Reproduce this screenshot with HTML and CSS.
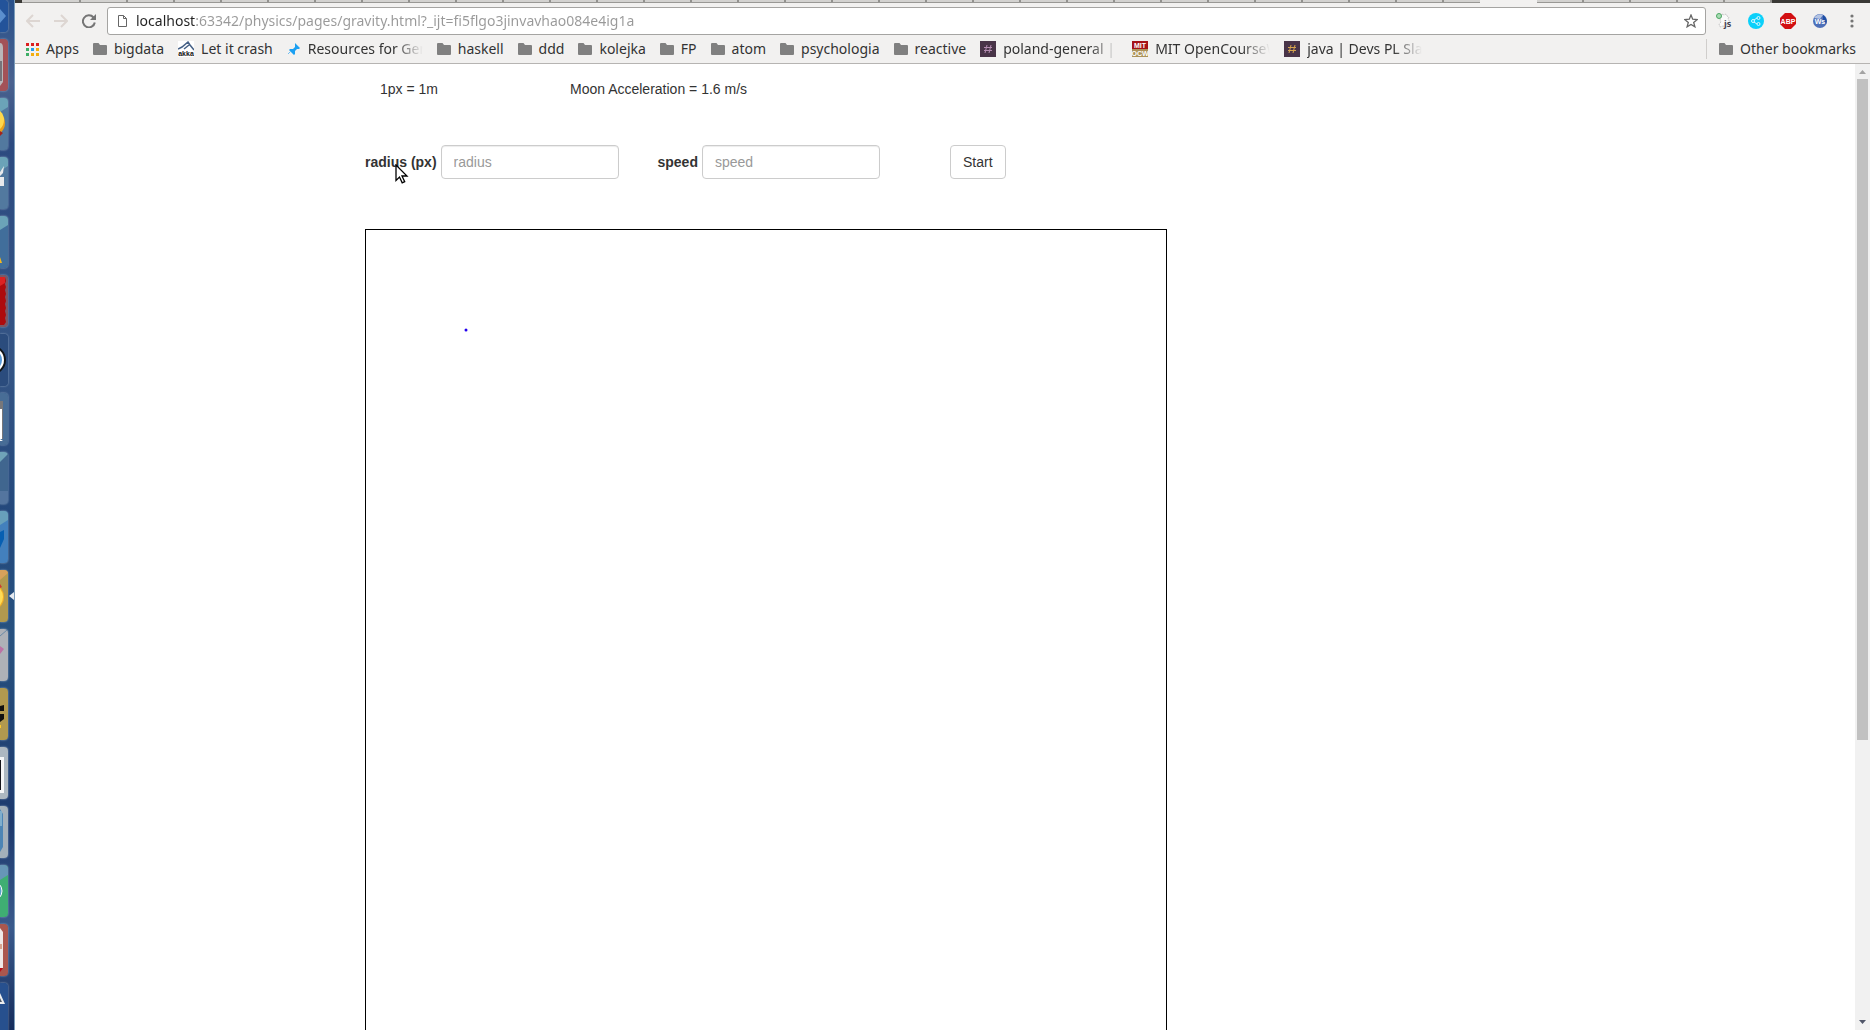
FILE: index.html
```html
<!DOCTYPE html>
<html lang="en">
<head>
  <meta charset="UTF-8">
  <meta name="viewport" content="width=device-width, initial-scale=1.0">
  <title>Gravity</title>
  <link rel="stylesheet" href="styles.css">
</head>
<body>
  <!-- shared icons -->
  <svg class="sprite" aria-hidden="true">
    <symbol id="folder" viewBox="0 0 14 12">
      <path d="M1 0h4.500l1.500 2h6q1 0 1 1v8q0 1-1 1H1q-1 0-1-1V1q0-1 1-1z" fill="#808080"/>
    </symbol>
  </svg>

  <!-- launcher -->
  <aside class="dock">
    <svg class="tile tile-first" viewBox="0 0 8 32"><path fill="#23539a" d="M0 0h8v32H0z"/><path d="M0 9l6 7-6 7z" fill="#5b8fce"/></svg>
    <svg class="tile" viewBox="0 0 8 52"><path fill="#a35257" d="M0 0h8v52H0z"/><path d="M0 4q3 0 3 5v34l-3 4z" fill="#b9b6b8"/><path d="M0 22h2v20H0z" fill="#77747a"/></svg>
    <svg class="tile" viewBox="0 0 8 52"><path fill="#52799f" d="M0 0h8v52H0z"/><path d="M0 0h8v9L0 14z" fill="#6ba3b8"/><circle cx="-8" cy="25" r="13" fill="#e8a01c"/><circle cx="-8" cy="22" r="12" fill="#ffd84c"/><path d="M0 33l3 2-3 3z" fill="#a3241c"/></svg>
    <svg class="tile" viewBox="0 0 8 52"><path fill="#52799f" d="M0 0h8v52H0z"/><path d="M0 0h8v9L0 14z" fill="#6ba3b8"/><path d="M0 15l4-6-1 7-3 3zM0 20h4v9H0z" fill="#e9eaec"/></svg>
    <svg class="tile" viewBox="0 0 8 52"><path fill="#416e9b" d="M0 0h8v52H0z"/><path d="M0 0h8v9L0 14z" fill="#6ba3b8"/><path d="M0 41l2 6H0z" fill="#f5b81c"/></svg>
    <svg class="tile" viewBox="0 0 8 52"><path fill="#7c5866" d="M0 0h8v52H0z"/><path d="M0 2h5l1 4-1 3 1 3-1 3 1 4-1 3 1 4-1 3 1 4-1 3 1 4-1 3 1 4-2 3H0z" fill="#ad0b0d"/><path d="M0 2h5v6L0 11z" fill="#dc2222"/></svg>
    <svg class="tile" viewBox="0 0 8 52"><path fill="#2b4c7d" d="M0 0h8v52H0z"/><circle cx="-9" cy="26" r="15" fill="#101418"/><circle cx="-9" cy="26" r="13" fill="#fff"/><circle cx="-9" cy="26" r="11" fill="#5b9bd8"/></svg>
    <svg class="tile" viewBox="0 0 8 52"><path fill="#486d96" d="M0 0h8v52H0z"/><path d="M0 8h3v38H0z" fill="#77777a"/><path d="M0 16h2v30H0zM0 46l3 2H0z" fill="#fff"/></svg>
    <svg class="tile" viewBox="0 0 8 52"><path fill="#40668f" d="M0 0h8v52H0z"/><path d="M0 0h8v2L0 10z" fill="#6fa3b8"/><path d="M0 39h8v13H0z" fill="#54759f"/></svg>
    <svg class="tile" viewBox="0 0 8 52"><path fill="#4380bd" d="M0 0h8v52H0z"/><path d="M0 0h8v9L0 14z" fill="#68a0bb"/><path d="M0 21l4-2v9l-4 9z" fill="#075fb2"/></svg>
    <svg class="tile" viewBox="0 0 8 52"><path fill="#b1994f" d="M0 0h8v52H0z"/><path d="M0 0h8v3L0 10z" fill="#d7a15b"/><circle cx="-10" cy="27" r="14" fill="#f2ae25"/><circle cx="-10" cy="27" r="13" fill="#ffdc54"/><path d="M0 14l2 3-2 1z" fill="#cf3b30"/></svg>
    <svg class="tile" viewBox="0 0 8 52"><path fill="#aeb1b7" d="M0 0h8v52H0z"/><path d="M0 7L7 1" stroke="#6a89a7"/><path d="M0 17l4 3-4 5z" fill="#bc72a5"/></svg>
    <svg class="tile" viewBox="0 0 8 52"><path fill="#b1994f" d="M0 0h8v52H0z"/><path d="M0 18l4-1v6H0zM0 26h4v5l-4 3z" fill="#111"/><path d="M0 37h1v3H0z" fill="#ffc92c"/></svg>
    <svg class="tile" viewBox="0 0 8 52"><path fill="#adb8c1" d="M0 0h8v52H0z"/><path d="M0 10h4v36H0z" fill="#f5f6f7"/><path d="M0 13h1v30H0z" fill="#15151b"/></svg>
    <svg class="tile" viewBox="0 0 8 52"><path fill="#a4b0ba" d="M0 0h8v52H0z"/><path d="M0 3l3 5v33l-3 5z" fill="#4d85b5"/><path d="M0 5h2v15H0z" fill="#7faecd"/></svg>
    <svg class="tile" viewBox="0 0 8 52"><path fill="#3fae73" d="M0 0h8v52H0z"/><path d="M0 0h8v10L0 15z" fill="#6796b7"/><circle cx="-8" cy="26" r="10" fill="#5b9fca" stroke="#fff"/></svg>
    <svg class="tile" viewBox="0 0 8 52"><path fill="#aa574e" d="M0 0h8v52H0z"/><path d="M0 4l3 4v36H0z" fill="#eee9e7"/><path d="M0 20h2v5H0z" fill="#d7a58f"/><path d="M0 44h3l-3 4z" fill="#b90f19"/></svg>
    <svg class="tile" viewBox="0 0 8 52"><path fill="#27508e" d="M0 0h8v52H0z"/><path d="M0 10l5 11H0z" fill="#eceded"/><path d="M0 15l2 4H0z" fill="#505a68"/></svg>
    <svg class="dock-pointer" viewBox="0 0 5 8"><path d="M0 4l5-4v8z" fill="#e5e9ef"/></svg>
  </aside>

  <div class="browser">
    <div class="tab-strip">
      <div class="tabs tabs-left"></div>
      <div class="tab-active"></div>
      <div class="tabs tabs-right"></div>
      <div class="tabs-end"></div>
    </div>

    <!-- toolbar -->
    <div class="toolbar">
      <button class="tool" type="button" aria-label="Back">
        <svg width="14" height="14" viewBox="0 0 14 14" fill="none" stroke="#ddd6d2" stroke-width="2"><path d="M14 7H1M7 1L1 7l6 6"/></svg>
      </button>
      <button class="tool" type="button" aria-label="Forward">
        <svg width="14" height="14" viewBox="0 0 14 14" fill="none" stroke="#ddd6d2" stroke-width="2"><path d="M0 7h13M7 1l6 6-6 6"/></svg>
      </button>
      <button class="tool" type="button" aria-label="Reload">
        <svg width="14" height="14" viewBox="0 0 14 14"><path d="M11.500 3.500A6 6 0 1 0 12.800 8.500" fill="none" stroke="#757575" stroke-width="2"/><path d="M14 0v6H8z" fill="#757575"/></svg>
      </button>
      <div class="address">
        <svg width="9" height="12" viewBox="0 0 9 12" fill="none" stroke="#666"><path d="M.500.500h5l3 3v8h-8zM5.500.500v3h3"/></svg>
        <input class="address-input" type="text" aria-label="Address" value="localhost:63342/physics/pages/gravity.html?_ijt=fi5flgo3jinvavhao084e4ig1a">
        <button class="tool" type="button" aria-label="Bookmark">
          <svg width="14" height="14" viewBox="0 0 14 14" fill="none" stroke="#666" stroke-width="1.300"><path d="M7 1l1.700 4.200 4.500.3-3.500 2.900 1.200 4.400L7 10.400l-3.900 2.400 1.200-4.400L.8 5.500l4.500-.3z"/></svg>
        </button>
      </div>
      <div class="extensions">
        <button class="tool" type="button" aria-label="Script switcher">
          <svg width="16" height="16" viewBox="0 0 16 16"><path d="M6 1l2 1 2-1 1 2 2 1-1 2 2 3-3 1-1 4-3-1-3 1-1-3 2-2-1-2z" fill="#fafafa" stroke="#c6c6c6" stroke-dasharray="2 1"/><circle cx="3" cy="3" r="2.500" fill="#a8dbb3" stroke="#4ba762"/><text x="8" y="14" class="js-text">js</text></svg>
        </button>
        <button class="tool" type="button" aria-label="Share">
          <svg width="16" height="16" viewBox="0 0 16 16"><circle cx="8" cy="8" r="8" fill="#0bd0fa"/><g fill="none" stroke="#d8f7ff"><path d="M6 7l3-2M6 9l3 2"/><circle cx="5" cy="8" r="1.500"/><circle cx="10.500" cy="5" r="1.500"/><circle cx="10.500" cy="11" r="1.500"/></g></svg>
        </button>
        <button class="tool" type="button" aria-label="Adblock">
          <svg width="16" height="16" viewBox="0 0 16 16"><path d="M5 0h6l5 5v6l-5 5H5l-5-5V5z" fill="#d20f12"/><text x="8" y="11" class="icon-text">ABP</text></svg>
        </button>
        <button class="tool" type="button" aria-label="Web of words">
          <svg width="16" height="16" viewBox="0 0 16 16"><circle cx="8" cy="8" r="7" fill="#4e70b8"/><path d="M2 5a7 7 0 0 1 9-3L8 6z" fill="#b3c3e3"/><path d="M11 2a7 7 0 0 1 3 9l-3-4z" fill="#1e4fa5"/><text x="8" y="11" class="icon-text">Ws</text></svg>
        </button>
        <button class="tool" type="button" aria-label="Menu">
          <svg width="16" height="16" viewBox="0 0 16 16" fill="#757575"><circle cx="8" cy="3" r="1.600"/><circle cx="8" cy="8" r="1.600"/><circle cx="8" cy="13" r="1.600"/></svg>
        </button>
      </div>
    </div>

    <!-- bookmarks -->
    <nav class="bookmarks">
      <a class="bookmark" href="#"><svg width="13" height="13" viewBox="0 0 13 13"><path d="M0 0h3v3H0zM5 0h3v3H5zM10 0h3v3h-3z" fill="#dc1f1f"/><path d="M0 5h3v3H0zM0 10h3v3H0z" fill="#3eae66"/><path d="M5 5h3v3H5z" fill="#249eed"/><path d="M10 5h3v3h-3zM5 10h3v3H5zM10 10h3v3h-3z" fill="#f3ae10"/></svg><span>Apps</span></a>
      <a class="bookmark" href="#"><svg width="14" height="12"><use href="#folder"/></svg><span>bigdata</span></a>
      <a class="bookmark" href="#"><svg width="16" height="16" viewBox="0 0 16 16"><path fill="#fff" d="M0 0h16v16H0z"/><path d="M0 8l4-2 6-5 2 3 4 5M6 8l5-4" fill="none" stroke="#456086" stroke-width="1.500"/><text x="8" y="15" class="icon-text icon-text-dark">akka</text></svg><span>Let it crash</span></a>
      <a class="bookmark bookmark-long" href="#"><svg width="14" height="14" viewBox="0 0 14 14"><path d="M8 1l5 5-1 1h-2l-2 2v3l-1 1-5-5 1-1h3l2-2V2z" fill="#1ba0f2"/><path d="M4 9l-3 3" stroke="#6fbdf0"/></svg><span>Resources for Germany</span></a>
      <a class="bookmark" href="#"><svg width="14" height="12"><use href="#folder"/></svg><span>haskell</span></a>
      <a class="bookmark" href="#"><svg width="14" height="12"><use href="#folder"/></svg><span>ddd</span></a>
      <a class="bookmark" href="#"><svg width="14" height="12"><use href="#folder"/></svg><span>kolejka</span></a>
      <a class="bookmark" href="#"><svg width="14" height="12"><use href="#folder"/></svg><span>FP</span></a>
      <a class="bookmark" href="#"><svg width="14" height="12"><use href="#folder"/></svg><span>atom</span></a>
      <a class="bookmark" href="#"><svg width="14" height="12"><use href="#folder"/></svg><span>psychologia</span></a>
      <a class="bookmark" href="#"><svg width="14" height="12"><use href="#folder"/></svg><span>reactive</span></a>
      <a class="bookmark bookmark-long" href="#"><svg width="16" height="16" viewBox="0 0 16 16"><path fill="#493448" d="M0 0h16v16H0z"/><path d="M7 4L5 12M11 4L9 12M4 6.500h8M4 9.500h8" stroke="#b38bb0"/></svg><span>poland-general | Slack</span></a>
      <a class="bookmark bookmark-long" href="#"><svg width="16" height="16" viewBox="0 0 16 16"><path fill="#a51318" d="M0 0h16v8H0z"/><path fill="#ac935a" d="M0 8h16v8H0z"/><text x="8" y="7" class="icon-text">MIT</text><text x="8" y="15" class="icon-text">OCW</text></svg><span>MIT OpenCourseWare</span></a>
      <a class="bookmark bookmark-long" href="#"><svg width="16" height="16" viewBox="0 0 16 16"><path fill="#493448" d="M0 0h16v16H0z"/><path d="M7 4L5 12M11 4L9 12M4 6.500h8M4 9.500h8" stroke="#d6a34d"/></svg><span>java | Devs PL Slack</span></a>
      <a class="bookmark bookmark-other" href="#"><svg width="14" height="12"><use href="#folder"/></svg><span>Other bookmarks</span></a>
    </nav>

    <div class="viewport">
      <!-- page content -->
      <main class="container">
        <div class="info">
          <div>1px = 1m</div>
          <div class="info-wide">Moon Acceleration = 1.6 m/s</div>
        </div>
        <form class="controls">
          <div class="form-group">
            <label for="radius">radius (px)</label>
            <input class="form-control" type="text" id="radius" placeholder="radius">
          </div>
          <div class="form-group">
            <label for="speed">speed</label>
            <input class="form-control" type="text" id="speed" placeholder="speed">
          </div>
          <div class="form-group">
            <button class="btn" type="button">Start</button>
          </div>
        </form>
        <svg class="space" width="802" height="1102">
          <circle cx="100" cy="100" r="1.500" fill="#2200ee"/>
        </svg>
      </main>

      <div class="scrollbar">
        <svg width="7" height="4" viewBox="0 0 7 4"><path d="M0 4l3.500-4L7 4z" fill="#a3a3a3"/></svg>
        <div class="scroll-track"><div class="scroll-thumb"></div></div>
        <svg width="7" height="4" viewBox="0 0 7 4"><path d="M0 0h7L3.500 4z" fill="#505669"/></svg>
      </div>
    </div>
  </div>

  <svg class="cursor" width="14" height="20" viewBox="0 0 14 20"><path d="M1 1v15.500l3.500-3.500 2.700 5.800 2.500-1.200L7 12h5z" fill="#fff" stroke="#000" stroke-width="1.300"/></svg>
</body>
</html>
```
FILE: styles.css
```css
* {
  box-sizing: border-box;
}
body {
  margin: 0;
  height: 100vh;
  display: flex;
  overflow: hidden;
  background: #fff;
  color: #333;
  font-family: "Liberation Sans", Arial, sans-serif;
  font-size: 14px;
  line-height: 20px;
}
.sprite {
  position: absolute;
  width: 0;
  height: 0;
}

/* launcher */
.dock {
  position: relative;
  flex: none;
  width: 15px;
  display: flex;
  flex-direction: column;
  gap: 7px;
  overflow: hidden;
  border-right: 1px solid #7a9cba;
  background: linear-gradient(#28508a, #4a628f 8%, #2c4a80 14%, #355585 35%, #23487c 50%, #27517f 62%, #1d396d 80%, #3a5a8c 90%, #152c5c);
}
.tile {
  flex: none;
  width: 8px;
  height: 52px;
  border-radius: 0 4px 4px 0;
  box-shadow: 0 0 2px #9db4cc;
}
.tile-first {
  height: 32px;
}
.dock-pointer {
  position: absolute;
  right: 0;
  top: 592px;
  width: 5px;
  height: 8px;
}

/* browser window */
.browser {
  flex: 1;
  min-width: 0;
  display: flex;
  flex-direction: column;
}
.tab-strip {
  flex: none;
  display: flex;
  height: 3px;
  padding-left: 7px;
  background: #3a3936;
}
.tabs {
  border-bottom: 1px solid #999895;
  background: repeating-linear-gradient(to right, #d3d2d0 0, #d3d2d0 45px, #92918e 45px, #92918e 47px);
}
.tabs-left {
  flex: 1;
  background:
    linear-gradient(#d3d2d0, #d3d2d0) 0 0 / 20px 100% no-repeat,
    repeating-linear-gradient(to right, #d3d2d0 0, #d3d2d0 45px, #92918e 45px, #92918e 47px) 12px 0;
}
.tab-active {
  width: 57px;
  background: #f2f1f0;
}
.tabs-right {
  width: 235px;
}
.tabs-end {
  width: 98px;
}
.toolbar {
  flex: none;
  display: flex;
  align-items: center;
  height: 36px;
  padding: 0 4px;
  background: #f2f1f0;
}
.tool {
  display: flex;
  align-items: center;
  justify-content: center;
  width: 28px;
  height: 24px;
  padding: 0;
  border: 0;
  background: none;
}
.address {
  flex: 1;
  display: flex;
  align-items: center;
  gap: 9px;
  height: 28px;
  margin: 0 4px;
  padding-left: 10px;
  border: 1px solid #a5a4a2;
  border-radius: 3px;
  background: #fff;
}
.address-input {
  flex: 1;
  padding: 0;
  border: 0;
  outline: 0;
  color: transparent;
  background: linear-gradient(to right, #222 59px, #999 59px);
  background-clip: text;
  -webkit-background-clip: text;
  font: 14px/20px "Noto Sans", sans-serif;
}
.extensions {
  display: flex;
  gap: 4px;
}
.js-text {
  font: bold 9px "Noto Sans", sans-serif;
  fill: #444455;
}
.icon-text {
  font: bold 7px "Liberation Sans", Arial, sans-serif;
  text-anchor: middle;
  fill: #fff;
}
.icon-text-dark {
  fill: #111;
}

/* bookmarks bar */
.bookmarks {
  flex: none;
  display: flex;
  align-items: center;
  gap: 14px;
  height: 25px;
  padding: 0 14px 4px 11px;
  border-bottom: 1px solid #b6b4b2;
  background: #f2f1f0;
  font: 14px/20px "Noto Sans", sans-serif;
}
.bookmark {
  flex: none;
  display: flex;
  align-items: center;
  gap: 7px;
  color: #333;
  text-decoration: none;
  white-space: nowrap;
}
.bookmark-long span {
  width: 115px;
  overflow: hidden;
  -webkit-mask-image: linear-gradient(to right, #000 75%, transparent);
  mask-image: linear-gradient(to right, #000 75%, transparent);
}
.bookmark-other {
  margin-left: auto;
  padding-left: 12px;
  border-left: 1px solid #d0cecc;
}

/* page */
.viewport {
  flex: 1;
  min-height: 0;
  display: flex;
  overflow: hidden;
}
.container {
  width: 1170px;
  margin: 0 auto;
  padding: 15px 0 0 15px;
}
.info {
  display: grid;
  grid-template-columns: repeat(6, 190px);
  margin-bottom: 46px;
  padding-left: 15px;
}
.info-wide {
  grid-column: span 2;
}
.controls {
  display: grid;
  grid-template-columns: repeat(4, 1fr);
  width: 1170px;
  margin-bottom: 50px;
}
.form-group {
  display: flex;
  align-items: center;
  gap: 4px;
}
label {
  font-weight: bold;
}
.form-control {
  width: 178px;
  height: 34px;
  padding: 6px 12px;
  border: 1px solid #ccc;
  border-radius: 4px;
  box-shadow: inset 0 1px 1px rgba(0, 0, 0, .075);
  font: inherit;
}
.form-control::placeholder {
  color: #999;
}
.btn {
  height: 34px;
  padding: 6px 12px;
  border: 1px solid #ccc;
  border-radius: 4px;
  background: #fff;
  color: #333;
  font: inherit;
}
.space {
  display: block;
  border: 1px solid #000;
}

/* scrollbar */
.scrollbar {
  flex: none;
  display: flex;
  flex-direction: column;
  align-items: center;
  gap: 5px;
  width: 15px;
  padding: 6px 0;
  background: #f1f1f1;
}
.scroll-track {
  flex: 1;
  width: 11px;
}
.scroll-thumb {
  height: calc(100% * 12 / 17);
  background: #c1c1c1;
}

.cursor {
  position: absolute;
  left: 395px;
  top: 164px;
}
```
